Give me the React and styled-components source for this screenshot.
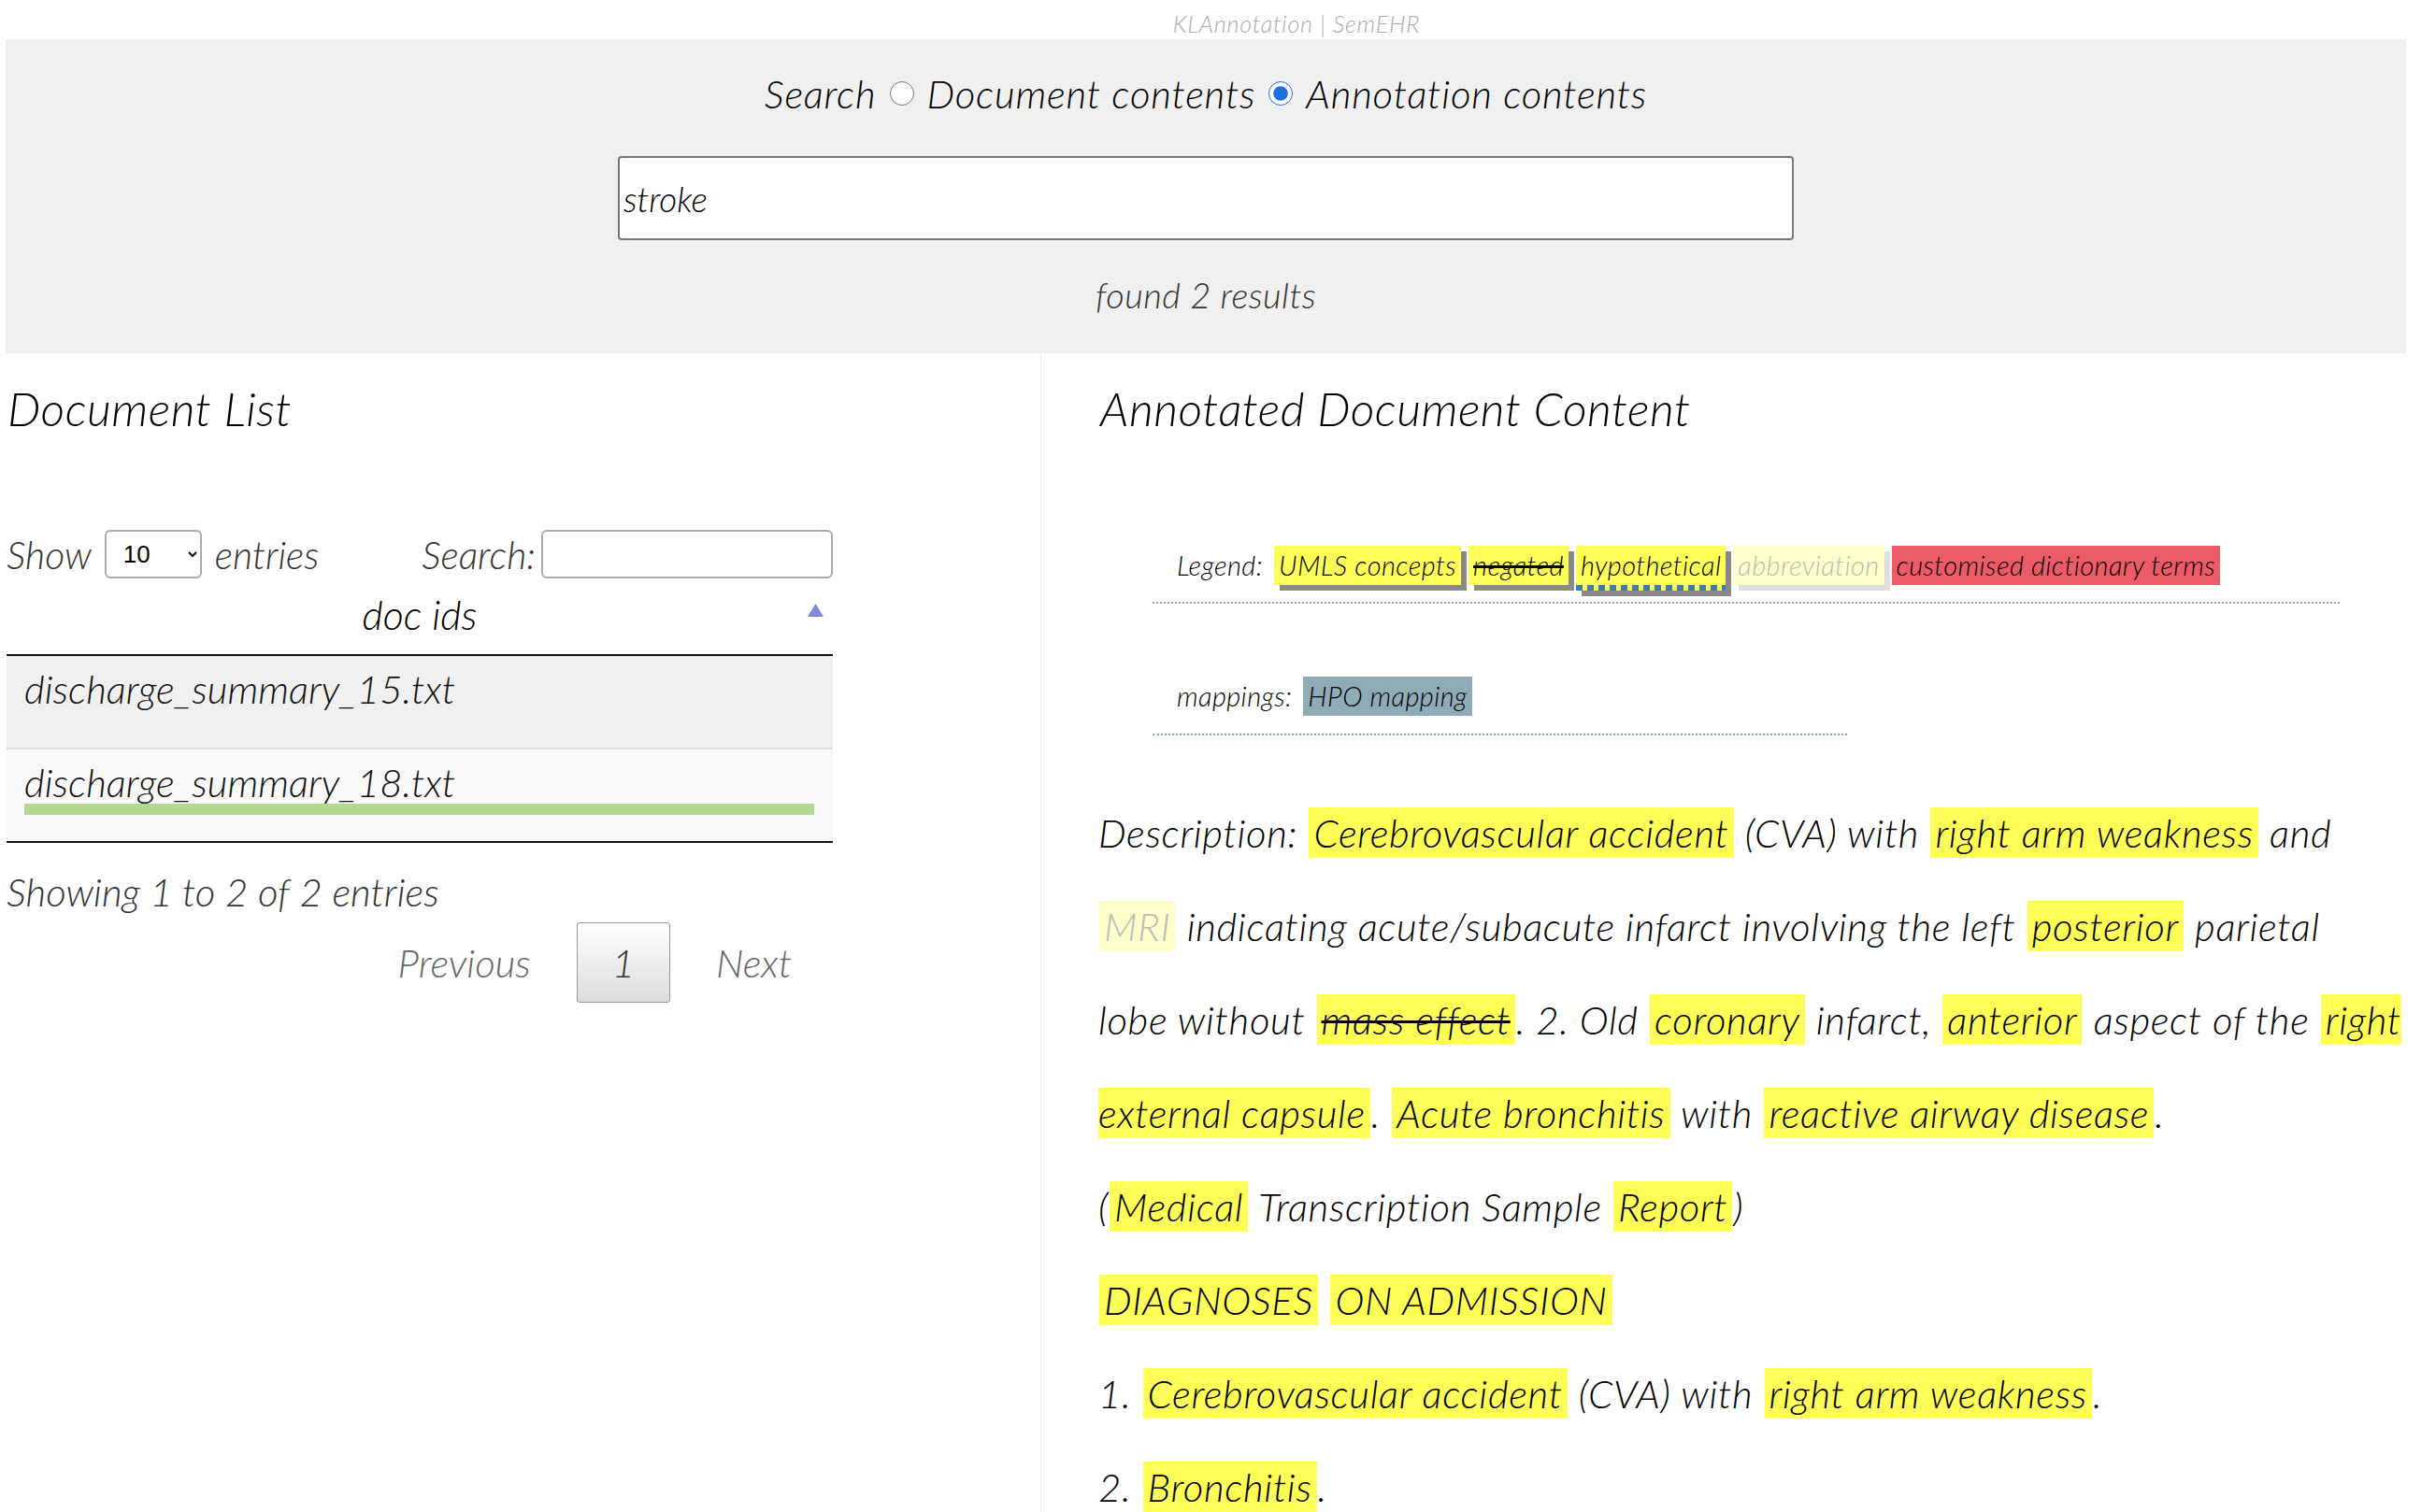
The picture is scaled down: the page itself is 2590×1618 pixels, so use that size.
import styled, { createGlobalStyle } from "styled-components";

const GlobalStyle = createGlobalStyle`
  html, body {
    margin: 0;
    padding: 0;
    overflow: hidden;
    background: #ffffff;
  }
  body {
    font-family: "Lato", "Open Sans", sans-serif;
    font-style: italic;
    font-weight: 300;
    color: #000000;
  }
`;

const Page = styled.div`
  box-sizing: border-box;
  width: 100%;
  height: 1618px;
  padding: 0 16px 0 6px;
  display: flex;
  flex-direction: column;
`;

const TopTitle = styled.div`
  flex-shrink: 0;
  height: 42px;
  box-sizing: border-box;
  padding: 8px 0 0 194px;
  line-height: 34px;
  font-size: 25px;
  letter-spacing: 0.8px;
  color: #aaaaaa;
  text-align: center;
`;

const SearchPanel = styled.div`
  flex-shrink: 0;
  background-color: #f0f0f0;
  height: 336px;
  box-sizing: border-box;
  padding-top: 28px;
  display: flex;
  flex-direction: column;
  align-items: center;
`;

const RadioRow = styled.div`
  display: flex;
  align-items: center;
  height: 60px;
  font-size: 42px;
  letter-spacing: 0.8px;
  gap: 14px;
`;

const RadioLabel = styled.label`
  display: flex;
  align-items: center;
  gap: 14px;
`;

const Radio = styled.input`
  width: 26px;
  height: 26px;
  margin: 0;
  accent-color: #1f6fe5;
`;

const MainInput = styled.input`
  margin-top: 37px;
  width: 1258px;
  height: 90px;
  box-sizing: border-box;
  border: 2px solid #767676;
  border-radius: 4px;
  background: #ffffff;
  padding: 0 4px;
  font-family: inherit;
  font-style: italic;
  font-weight: 300;
  font-size: 37px;
  color: #000000;
  outline: none;
`;

const FoundText = styled.div`
  margin-top: 33px;
  line-height: 50px;
  font-size: 38px;
  letter-spacing: 0.4px;
  color: #333333;
`;

const Columns = styled.div`
  display: flex;
  flex: 1;
`;

const LeftCol = styled.div`
  width: 1107px;
  flex-shrink: 0;
  border-right: 1px solid #ececec;
`;

const RightCol = styled.div`
  flex: 1;
  padding-left: 61px;
`;

const Heading = styled.h2`
  margin: 29px 0 0 2px;
  height: 60px;
  line-height: 60px;
  font-size: 50px;
  letter-spacing: 0.5px;
  font-weight: 300;
  font-style: italic;
`;

const TableWrap = styled.div`
  width: 884px;
  margin-left: 1px;
  margin-top: 100px;
`;

const ControlsRow = styled.div`
  display: flex;
  justify-content: space-between;
  align-items: center;
  height: 52px;
  font-size: 41px;
  color: #333333;
`;

const ControlGroup = styled.div`
  display: flex;
  align-items: center;
  gap: ${(p) => p.$gap || 14}px;
`;

const EntriesSelect = styled.select`
  width: 104px;
  height: 52px;
  border: 2px solid #aaaaaa;
  border-radius: 6px;
  background: #ffffff;
  font-family: "Liberation Sans", Arial, sans-serif;
  font-style: normal;
  font-size: 26px;
  padding-left: 14px;
  color: #000000;
`;

const FilterInput = styled.input`
  width: 312px;
  height: 52px;
  box-sizing: border-box;
  border: 2px solid #aaaaaa;
  border-radius: 6px;
  background: #ffffff;
`;

const HeaderCell = styled.div`
  position: relative;
  height: 83px;
  box-sizing: border-box;
  padding-top: 10px;
  line-height: 58px;
  font-size: 43px;
  text-align: center;
  border-bottom: 2px solid #111111;
`;

const SortIcon = styled.svg`
  position: absolute;
  right: 10px;
  top: 27px;
`;

const Row = styled.div`
  background: ${(p) => (p.$odd ? "#f0f0f0" : "#f9f9f9")};
  padding: 13px 20px 28px 19px;
  border-bottom: ${(p) => (p.$last ? "2px solid #111111" : "2px solid #dddddd")};
`;

const RowText = styled.div`
  line-height: 44px;
  font-size: 42px;
  color: #111111;
`;

const RowBar = styled.div`
  margin-top: 1px;
  height: 12px;
  background: ${(p) => (p.$show ? "#b1d98f" : "transparent")};
`;

const InfoText = styled.div`
  margin-top: 30px;
  line-height: 44px;
  font-size: 42px;
  color: #333333;
`;

const Pager = styled.div`
  margin-top: 11px;
  display: flex;
  justify-content: flex-end;
  align-items: center;
  gap: 49px;
  padding-right: 44px;
  font-size: 42px;
  color: #666666;
`;

const PageButton = styled.div`
  width: 100px;
  height: 86px;
  box-sizing: border-box;
  border: 1px solid #979797;
  border-radius: 3px;
  background: linear-gradient(#ffffff, #dcdcdc);
  display: flex;
  align-items: center;
  justify-content: center;
  color: #333333;
`;

const LegendBox = styled.div`
  width: ${(p) => p.$w}px;
  box-sizing: border-box;
  margin: ${(p) => p.$top}px 0 0 58px;
  padding: 0 0 ${(p) => p.$pb}px 26px;
  border-bottom: 2px dotted #8ea9b8;
  display: flex;
  align-items: flex-start;
  gap: 8px;
  font-size: 29px;
  letter-spacing: 0.4px;
`;

const LegendLabel = styled.span`
  line-height: 42px;
  margin-right: 4px;
`;

const Tag = styled.span`
  line-height: 42px;
  padding: 0 ${(p) => (p.$kind === "hpo" ? 5 : 5)}px
    ${(p) => (p.$kind === "hypo" ? 6 : 0)}px;
  color: ${(p) => (p.$kind === "abbr" ? "#bbbbbb" : "#000000")};
  background-color: ${(p) =>
    ({ abbr: "#ffffcc", custom: "#ec5b68", hpo: "#90abb8" })[p.$kind] ||
    "#ffff57"};
  box-shadow: ${(p) =>
    p.$kind === "abbr"
      ? "6px 6px 0 #dddddd"
      : p.$kind === "custom" || p.$kind === "hpo"
      ? "none"
      : "6px 6px 0 #888888"};
  text-decoration: ${(p) => (p.$kind === "neg" ? "line-through" : "none")};
  text-decoration-thickness: 3px;
  background-image: ${(p) =>
    p.$kind === "hypo"
      ? "repeating-linear-gradient(90deg, #3d7cb8 0 7px, transparent 7px 12px)"
      : "none"};
  background-size: 100% 6px;
  background-position: bottom left;
  background-repeat: no-repeat;
`;

const Doc = styled.div`
  margin-top: 54px;
  font-size: 42px;
  letter-spacing: 0.65px;
  line-height: 100px;
  white-space: nowrap;
`;

const Hl = styled.span`
  padding: 2px 5px;
  margin: 0 1px;
  background: ${(p) => (p.$abbr ? "#ffffcc" : "#ffff57")};
  color: ${(p) => (p.$abbr ? "#bbbbbb" : "inherit")};
  text-decoration: ${(p) => (p.$neg ? "line-through" : "none")};
  text-decoration-thickness: 3px;
`;

const docs = [
  { id: "discharge_summary_15.txt", match: false },
  { id: "discharge_summary_18.txt", match: true },
];

export default function App() {
  return (
    <Page>
      <GlobalStyle />
      <TopTitle>KLAnnotation | SemEHR</TopTitle>
      <SearchPanel>
        <RadioRow>
          <span>Search</span>
          <RadioLabel>
            <Radio type="radio" name="mode" />
            Document contents
          </RadioLabel>
          <RadioLabel>
            <Radio type="radio" name="mode" defaultChecked />
            Annotation contents
          </RadioLabel>
        </RadioRow>
        <MainInput defaultValue="stroke" />
        <FoundText>found 2 results</FoundText>
      </SearchPanel>

      <Columns>
        <LeftCol>
          <Heading>Document List</Heading>
          <TableWrap>
            <ControlsRow>
              <ControlGroup>
                <span>Show</span>
                <EntriesSelect defaultValue="10">
                  <option>10</option>
                  <option>25</option>
                  <option>50</option>
                </EntriesSelect>
                <span>entries</span>
              </ControlGroup>
              <ControlGroup $gap={6}>
                <span>Search:</span>
                <FilterInput />
              </ControlGroup>
            </ControlsRow>
            <HeaderCell>
              doc ids
              <SortIcon width="17" height="14" viewBox="0 0 17 14">
                <polygon points="8.5,0 17,14 0,14" fill="#8088d8" />
              </SortIcon>
            </HeaderCell>
            {docs.map((d, i) => (
              <Row key={d.id} $odd={i % 2 === 0} $last={i === docs.length - 1}>
                <RowText>{d.id}</RowText>
                <RowBar $show={d.match} />
              </Row>
            ))}
            <InfoText>Showing 1 to 2 of 2 entries</InfoText>
            <Pager>
              <span>Previous</span>
              <PageButton>1</PageButton>
              <span>Next</span>
            </Pager>
          </TableWrap>
        </LeftCol>

        <RightCol>
          <Heading>Annotated Document Content</Heading>
          <LegendBox $w={1270} $top={117} $pb={12}>
            <LegendLabel>Legend:</LegendLabel>
            <Tag>UMLS concepts</Tag>
            <Tag $kind="neg">negated</Tag>
            <Tag $kind="hypo">hypothetical</Tag>
            <Tag $kind="abbr">abbreviation</Tag>
            <Tag $kind="custom">customised dictionary terms</Tag>
          </LegendBox>
          <LegendBox $w={743} $top={78} $pb={19}>
            <LegendLabel>mappings:</LegendLabel>
            <Tag $kind="hpo">HPO mapping</Tag>
          </LegendBox>
          <Doc>
            <div>
              Description: <Hl>Cerebrovascular accident</Hl> (CVA) with{" "}
              <Hl>right arm weakness</Hl> and
              <br />
              <Hl $abbr>MRI</Hl> indicating acute/subacute infarct involving
              the left <Hl>posterior</Hl> parietal
              <br />
              lobe without <Hl $neg>mass effect</Hl>. 2. Old{" "}
              <Hl>coronary</Hl> infarct, <Hl>anterior</Hl> aspect of the{" "}
              <Hl>
                right
                <br />
                external capsule
              </Hl>
              . <Hl>Acute bronchitis</Hl> with{" "}
              <Hl>reactive airway disease</Hl>.
            </div>
            <div>
              (<Hl>Medical</Hl> Transcription Sample <Hl>Report</Hl>)
            </div>
            <div>
              <Hl>DIAGNOSES</Hl> <Hl>ON ADMISSION</Hl>
            </div>
            <div>
              1. <Hl>Cerebrovascular accident</Hl> (CVA) with{" "}
              <Hl>right arm weakness</Hl>.
            </div>
            <div>
              2. <Hl>Bronchitis</Hl>.
            </div>
          </Doc>
        </RightCol>
      </Columns>
    </Page>
  );
}
